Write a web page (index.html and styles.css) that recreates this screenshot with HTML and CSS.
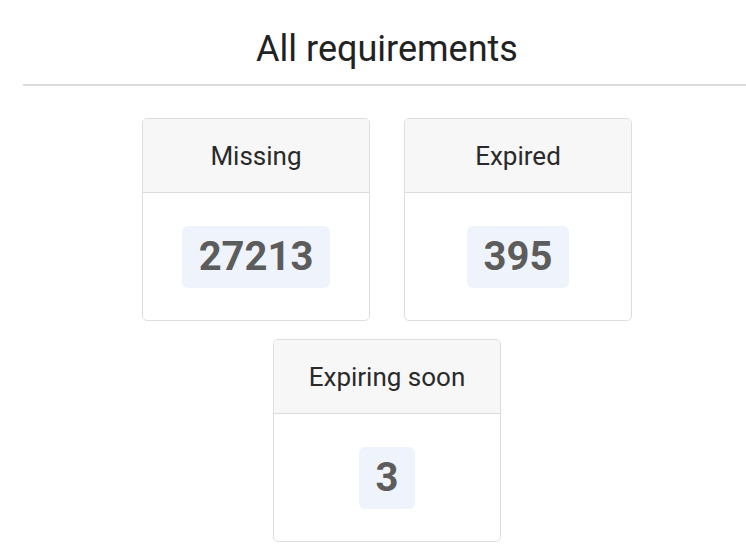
FILE: index.html
```html
<!DOCTYPE html>
<html lang="en">
  <head>
    <meta charset="UTF-8" />
    <meta name="viewport" content="width=device-width, initial-scale=1.0" />
    <title>All requirements</title>
    <link rel="stylesheet" href="styles.css">
  </head>
  <body>
    <div class="page">
      <h1>All requirements</h1>
      <div class="cards">
        <div class="card">
          <div class="card-head">Missing</div>
          <div class="card-body"><span class="count">27213</span></div>
        </div>
        <div class="card">
          <div class="card-head">Expired</div>
          <div class="card-body"><span class="count">395</span></div>
        </div>
        <div class="card">
          <div class="card-head">Expiring soon</div>
          <div class="card-body"><span class="count">3</span></div>
        </div>
      </div>
    </div>
  </body>
</html>
```
FILE: styles.css
```css
html,
body {
  font-family: Roboto, 'Liberation Sans', sans-serif;
  margin: 0;
  padding: 0;
  background: #fff;
  color: #222;
  overflow: hidden;
}
.page {
  margin: 0 -5px 0 23px;
}
h1 {
  font-size: 36px;
  font-weight: 400;
  line-height: 42px;
  text-align: center;
  margin: 0;
  padding: 28px 0 0;
  box-sizing: border-box;
  height: 86px;
  border-bottom: 2px solid #dcdcdc;
}
.cards {
  display: flex;
  flex-wrap: wrap;
  justify-content: center;
  gap: 18px 34px;
  padding-top: 32px;
}
.card {
  width: 228px;
  height: 203px;
  box-sizing: border-box;
  border: 1px solid #dedede;
  border-radius: 5px;
  overflow: hidden;
  display: flex;
  flex-direction: column;
}
.card-head {
  height: 74px;
  box-sizing: border-box;
  background: #f7f7f7;
  border-bottom: 1px solid #dcdcdc;
  font-size: 26px;
  color: #2a2a2a;
  display: flex;
  align-items: center;
  justify-content: center;
}
.card-body {
  flex: 1;
  display: flex;
  align-items: center;
  justify-content: center;
}
.count {
  display: inline-block;
  background: #eff3fb;
  border-radius: 6px;
  padding: 0 17px;
  height: 62px;
  line-height: 62px;
  font-size: 40px;
  font-weight: 700;
  color: #5c5c5c;
}
```
